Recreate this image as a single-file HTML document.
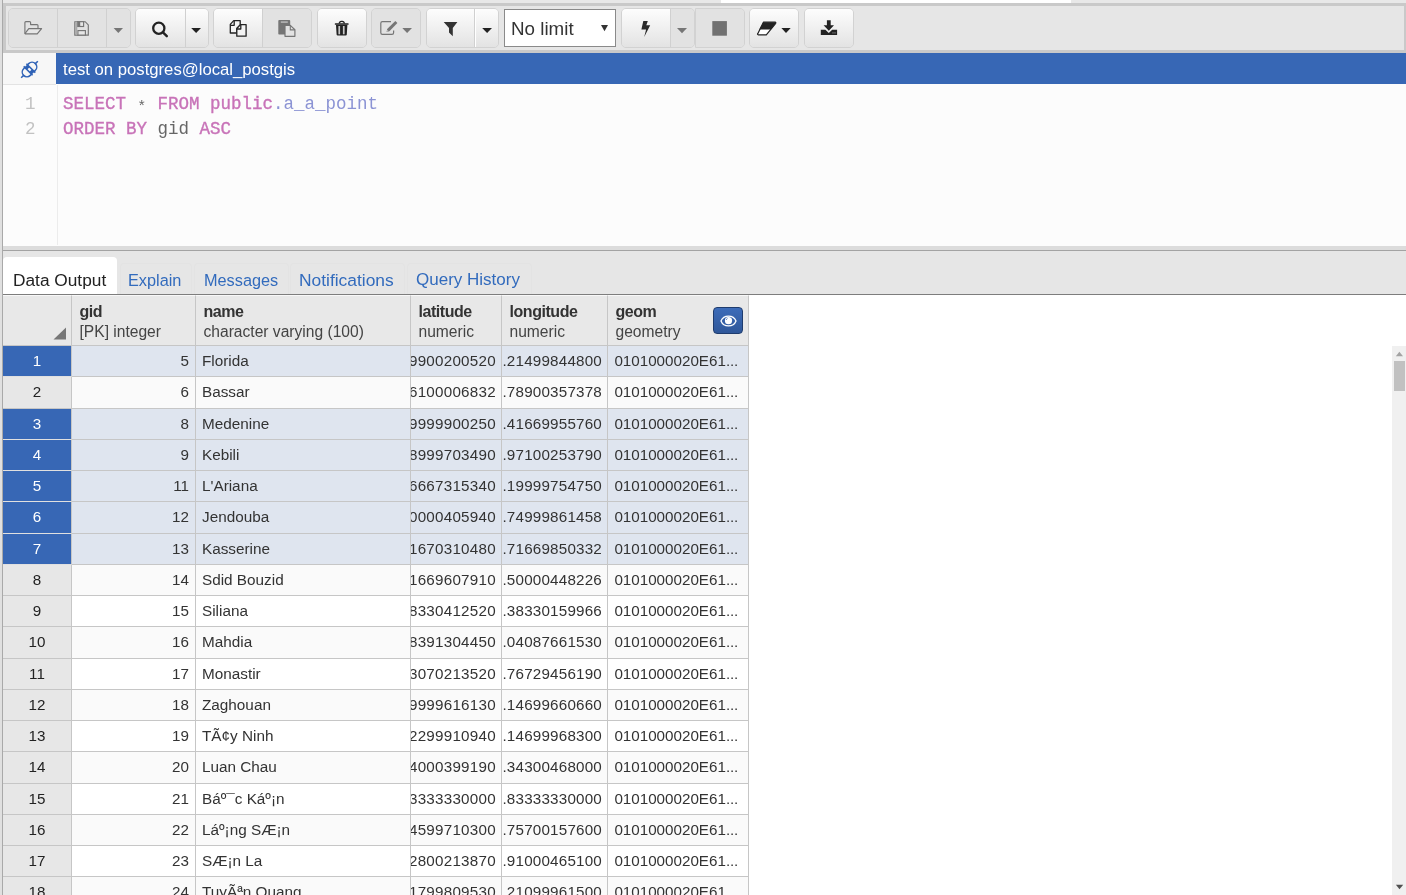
<!DOCTYPE html>
<html><head><meta charset="utf-8">
<style>
*{box-sizing:border-box;margin:0;padding:0}
html,body{will-change:transform;width:1406px;height:895px;overflow:hidden;background:#fff;font-family:"Liberation Sans",sans-serif;position:relative}
.abs{position:absolute}
#lstrip{left:0;top:0;width:2px;height:895px;background:#e0e0e0}
#lline{left:2px;top:0;width:1px;height:895px;background:#a9a9a9}
#topstrip{left:3px;top:0;width:1403px;height:3px;background:#e8e8e8}
#topwhite{left:721px;top:0;width:350px;height:3px;background:#fff}
#toolbar{left:3px;top:3px;width:1403px;height:50px;border:3px solid #c9c9c9;border-right-width:2px;background:#e6e6e6}
.grp{position:absolute;top:8px;height:39.5px;border:1px solid #d2d2d2;border-radius:5px;overflow:hidden;display:flex}
.btn{position:relative;height:100%}
.en{background:linear-gradient(#fdfdfd,#e3e3e3)}
.dis{background:#e2e2e2}
.sep{border-left:1px solid #d0d0d0}
.sepw{border-left:1px solid #d0d0d0;box-shadow:inset 1px 0 0 #fff}
.btn svg{position:absolute}
#conn{left:3px;top:53px;width:53px;height:32px;background:#f7f7f7;border-bottom:1px solid #e3e3e3}
#connbar{left:56px;top:53px;width:1350px;height:31px;background:#3767b5;color:#fff;font-size:16.7px;line-height:33px;padding-left:7px}
#gutter{left:3px;top:85px;width:55px;height:160px;background:#fcfcfc;border-right:1px solid #ececec}
#code{left:58px;top:84px;width:1348px;height:161px;background:#fcfcfc}
.ln{position:absolute;left:0;width:32.5px;text-align:right;font-family:"Liberation Mono",monospace;font-size:17.5px;color:#c2c2c2}
.cl{position:absolute;left:63px;font-family:"Liberation Mono",monospace;font-size:17.5px;color:#666;white-space:pre}
.kw{-webkit-text-stroke:0.35px currentColor}
.ast{position:relative;top:2px;font-size:15px;display:inline-block;width:10.5px;text-align:center}
.kw{color:#c873b8}
.id{color:#8b93d4}
#spl1{left:3px;top:245px;width:1403px;height:1px;background:#fcfcfc}
#spl2{left:3px;top:246px;width:1403px;height:4px;background:#dcdcdc}
#spl3{left:3px;top:250px;width:1403px;height:1px;background:#a3a3a3}
#tabs{left:3px;top:251px;width:1403px;height:43px;background:#e6e6e6}
#tabline{left:3px;top:294px;width:1403px;height:1px;background:#7d7d7d}
.tab{position:absolute;top:21px;font-size:16.3px;color:#326bbd;white-space:pre}
#acttab{left:3px;top:257px;width:114px;height:37px;background:#fff;border-radius:4px 4px 0 0}
/* grid */
#grid{left:3px;top:295px;width:746px;height:600px;overflow:hidden}
.hdr{position:absolute;top:0;height:51px;background:#e8e8e8;border-top:1px solid #f8f8f8;border-right:1px solid #c6c6c6;border-bottom:1px solid #c6c6c6}
.hl{position:absolute;left:7.5px;top:6.8px;font-size:16px;letter-spacing:-0.45px;font-weight:bold;color:#333;white-space:pre}
.ht{position:absolute;left:7.5px;top:26.5px;font-size:15.6px;color:#444;white-space:pre}
.row{position:absolute;left:0;width:746px;height:31.25px}
.c{position:absolute;top:0;height:31.25px;border-right:1px solid #c6c6c6;border-bottom:1px solid #c6c6c6;font-size:15.2px;color:#333;line-height:30px;white-space:pre;overflow:hidden}
.rn{left:0;width:69px;text-align:center;background:#e7e7e7;color:#222}
.sel .rn{background:#3767b5;color:#fff;border-bottom-color:#e0e0e0}
.c1{left:69px;width:124px;text-align:right;padding-right:6px}
.c2{left:193px;width:215px;padding-left:6px;font-size:15.3px}
.c3{left:408px;width:91px;direction:rtl;text-align:left;padding-left:0}
.c3 span{direction:ltr;unicode-bidi:bidi-override;position:absolute;right:5.1px;letter-spacing:0.25px}
.c4{left:499px;width:106px}
.c4 span{position:absolute;right:5px;letter-spacing:0.2px}
.c5{left:605px;width:141px;padding-left:6.4px}
.even .c{background:#fafafa}
.odd .c{background:#fff}
.sel .c{background:#dfe5ef}
.row .c.rn{background:#e7e7e7}
.row.sel .c.rn{background:#3767b5;color:#fff}
#sb{left:1392px;top:346px;width:14px;height:549px;background:#f0f0f0}
#sbthumb{left:1394px;top:361px;width:11px;height:30px;background:#c1c1c1}
</style></head><body>
<div class="abs" id="lstrip"></div>
<div class="abs" id="lline"></div>
<div class="abs" id="topstrip"></div>
<div class="abs" id="topwhite"></div>
<div class="abs" id="toolbar"></div>
<div class="grp" style="left:7.8px;width:123.4px"><div class="btn dis" style="width:48.3px"></div><div class="btn dis sep" style="width:49.2px"></div><div class="btn dis sep" style="flex:1"></div></div>
<div class="grp en2" style="left:135.0px;width:73.8px"><div class="btn en" style="width:48.5px"></div><div class="btn en sep" style="flex:1"></div></div>
<div class="grp" style="left:213.1px;width:99.0px"><div class="btn en" style="width:48.1px"></div><div class="btn dis sep" style="flex:1"></div></div>
<div class="grp" style="left:317.1px;width:49.7px"><div class="btn en" style="flex:1"></div></div>
<div class="grp" style="left:370.8px;width:50.4px"><div class="btn dis" style="flex:1"></div></div>
<div class="grp" style="left:426.2px;width:72.6px"><div class="btn en" style="width:47.2px"></div><div class="btn en sepw" style="flex:1"></div></div>
<div class="abs" style="left:504px;top:9px;width:111.7px;height:37.7px;background:#fff;border:1px solid #8a8a8a"></div>
<div class="abs" style="left:511px;top:17.7px;font-size:18.8px;color:#333;white-space:pre">No limit</div>
<div class="grp" style="left:621.1px;width:73.7px"><div class="btn en" style="width:48.1px"></div><div class="btn dis sep" style="flex:1"></div></div>
<div class="grp" style="left:694.5px;width:50.8px;border-radius:0 5px 5px 0"><div class="btn dis" style="flex:1"></div></div>
<div class="grp" style="left:748.8px;width:50.1px"><div class="btn en" style="flex:1"></div></div>
<div class="grp" style="left:803.6px;width:50.3px"><div class="btn en" style="flex:1"></div></div>
<svg class="abs" style="left:0;top:0" width="1406" height="53" viewBox="0 0 1406 53">
 <!-- folder -->
 <g fill="none" stroke="#757575" stroke-width="1.15" stroke-linejoin="round">
  <path d="M24.9,33.6 V22.6 Q24.9,21.6 25.9,21.6 H29.6 Q30.6,21.6 30.6,22.6 V24.6 H37 Q38,24.6 38,25.6 V28.3"/>
  <path d="M24.9,33.6 L28.8,28.6 H41.6 L37.2,33.9 H25.4 Z" fill="#e6e6e6"/>
 </g>
 <!-- save -->
 <g fill="none" stroke="#757575" stroke-width="1.15">
  <path d="M74.8,21.7 H85.2 L88.3,24.9 V35.1 H74.8 Z"/>
  <rect x="77.6" y="21.7" width="6" height="4.8" fill="#e6e6e6"/>
  <rect x="77.6" y="21.7" width="2.6" height="4.8" fill="#757575" stroke="none"/>
  <rect x="77.9" y="30.6" width="7.5" height="4.5" fill="#e6e6e6"/>
  <rect x="75.3" y="22.2" width="2" height="12.4" fill="#aaa" stroke="none"/>
 </g>
 <!-- carets -->
 <path d="M113.6,28.1 H123 L118.3,33 Z" fill="#767676"/>
 <path d="M191.2,28.1 H201 L196.1,33 Z" fill="#222"/>
 <path d="M402.3,27.9 H412 L407.1,33 Z" fill="#767676"/>
 <path d="M482.2,27.9 H492 L487.1,33 Z" fill="#222"/>
 <path d="M677,27.9 H687 L682,33.2 Z" fill="#767676"/>
 <path d="M781.4,27.9 H790.7 L786,33 Z" fill="#222"/>
 <path d="M601,25 H608 L604.5,31.3 Z" fill="#333"/>
 <!-- search -->
 <circle cx="158.8" cy="28.2" r="5.6" fill="none" stroke="#222" stroke-width="2.3"/>
 <path d="M163.2,32.7 L166.8,36.2" stroke="#222" stroke-width="2.4" stroke-linecap="round"/>
 <!-- copy -->
 <g fill="#f4f4f4" stroke="#222" stroke-width="1.3" stroke-linejoin="round">
  <path d="M230.3,24.4 L233.7,20.6 H240.2 V25 L236.8,28.5 V33 H230.3 Z"/>
  <path d="M230.5,25.3 H234.2 V21" fill="none"/>
  <path d="M236.8,28.5 L240.5,24.6 H246.1 V36.2 H236.8 Z"/>
  <path d="M237,29 H240.8 V24.8" fill="none"/>
 </g>
 <!-- paste -->
 <rect x="278.3" y="20.1" width="11.9" height="14.5" rx="0.8" fill="#757575"/>
 <rect x="280.8" y="21.3" width="7" height="1.6" fill="#b5b5b5"/>
 <path d="M285,25.4 H290.3 L294.9,29.8 V36.3 H285 Z" fill="#e2e2e2" stroke="#757575" stroke-width="1.2" stroke-linejoin="round"/>
 <path d="M290.3,25.4 V29.9 H294.9" fill="none" stroke="#757575" stroke-width="1.1"/>
 <!-- trash -->
 <g fill="#222">
  <path d="M338.6,23.5 Q338.9,20.8 341.3,20.8 H342.3 Q344.7,20.8 345,23.5 H343.8 Q343.6,22 342.1,22 H341.5 Q340,22 339.8,23.5 Z"/>
  <rect x="334.8" y="23.3" width="13.8" height="1.5" rx="0.5"/>
  <path d="M336,24.8 H347.4 L346.8,34.6 Q346.7,35.6 345.7,35.6 H337.7 Q336.7,35.6 336.6,34.6 Z"/>
 </g>
 <rect x="338.4" y="26" width="1.7" height="8.3" fill="#c8c8c8"/>
 <rect x="342.9" y="26" width="1.7" height="8.3" fill="#c8c8c8"/>
 <!-- edit -->
 <path d="M391,21.6 H382.4 Q380.8,21.6 380.8,23.2 V32.8 Q380.8,34.4 382.4,34.4 H392 Q393.6,34.4 393.6,32.8 V30.4" fill="none" stroke="#767676" stroke-width="1.2"/>
 <path d="M386.6,32.1 L387.2,29 L395.3,21 L397.4,23.1 L389.4,31.2 Z" fill="#767676"/>
 <path d="M386.9,31.8 L387.4,30 L388.3,30.9 Z" fill="#e2e2e2"/>
 <!-- filter -->
 <path d="M443.7,22.1 H457.4 L452.8,27.9 V36.2 L449,32.6 V27.9 Z" fill="#333"/>
 <!-- bolt -->
 <path d="M643.3,21 L647.8,21 L646.3,25.3 L650.2,25.2 L644.2,36.9 L646.1,29.4 L641.4,29.6 Z" fill="#2a2a2a"/>
 <!-- stop -->
 <rect x="712.3" y="21.1" width="14.6" height="14.6" fill="#717171"/>
 <!-- eraser -->
 <path d="M763.4,22.2 H775 Q776.4,22.4 775.5,23.6 L766.3,34.8 H758.4 Q757,34.6 757.9,33.4 Z" fill="#fff" stroke="#222" stroke-width="1.2" stroke-linejoin="round"/>
 <path d="M763.4,22.2 H775 Q776.4,22.4 775.5,23.6 L770.8,29.6 H759.2 Z" fill="#222"/>
 <!-- download -->
 <path d="M826.9,20.2 H830.7 V25.3 H834 L828.8,30.8 L823.6,25.3 H826.9 Z" fill="#222"/>
 <path d="M820.8,29.8 H825.4 L828.8,32.9 L832.2,29.8 H837.1 V34.9 H820.8 Z" fill="#222"/>
 <rect x="832.4" y="32.4" width="1.2" height="1" fill="#999"/>
 <rect x="834.4" y="32.4" width="1.2" height="1" fill="#999"/>
</svg>


<div class="abs" id="conn"></div>
<svg class="abs" style="left:16.9px;top:56.9px" width="25" height="25" viewBox="-12.5 -12.5 25 25"><g transform="rotate(-45)" fill="none" stroke="#2f62b6" stroke-width="1.5" stroke-linecap="butt"><path d="M-11.8,0 H-8.3"/><path d="M8.3,0 H11.8"/><path d="M-1.9,-4.7 H-3.6 A4.7,4.7 0 0 0 -3.6,4.7 H-1.9"/><path d="M1.9,-4.7 H3.6 A4.7,4.7 0 0 1 3.6,4.7 H1.9"/><path d="M-1.9,-6.3 V6.3"/><path d="M1.9,-6.3 V6.3"/></g><g transform="rotate(-45)" fill="#2f62b6"><rect x="-2" y="-5.1" width="4" height="3.5"/><rect x="-2" y="1.6" width="4" height="3.5"/></g></svg>
<div class="abs" id="connbar">test on postgres@local_postgis</div>
<div class="abs" id="gutter">
  <div class="ln" style="top:9px">1</div>
  <div class="ln" style="top:34px">2</div>
</div>
<div class="abs" id="code"></div>
<div class="cl abs" style="top:94px"><span class="kw">SELECT</span> <span class="ast">*</span> <span class="kw">FROM</span> <span class="kw">public</span><span class="id">.a_a_point</span></div>
<div class="cl abs" style="top:119px"><span class="kw">ORDER</span> <span class="kw">BY</span> gid <span class="kw">ASC</span></div>

<div class="abs" id="spl1"></div>
<div class="abs" id="spl2"></div>
<div class="abs" id="spl3"></div>
<div class="abs" id="tabs"></div>
<div class="abs" id="acttab"></div>
<div class="abs" style="left:119.5px;top:263px;width:72.5px;height:31px;border:1px solid #e3e3e3;border-bottom:none;border-radius:4px 4px 0 0"></div>
<div class="abs" style="left:193.5px;top:263px;width:95px;height:31px;border:1px solid #e3e3e3;border-bottom:none;border-radius:4px 4px 0 0"></div>
<div class="abs" style="left:290px;top:263px;width:115px;height:31px;border:1px solid #e3e3e3;border-bottom:none;border-radius:4px 4px 0 0"></div>
<div class="abs" style="left:406.5px;top:263px;width:125px;height:31px;border:1px solid #e3e3e3;border-bottom:none;border-radius:4px 4px 0 0"></div>

<div class="abs" id="tabline"></div>
<div class="abs tab" style="left:13px;top:269.6px;color:#222;font-size:17.3px">Data Output</div>
<div class="abs tab" style="left:128px;top:270.6px">Explain</div>
<div class="abs tab" style="left:204px;top:270.6px">Messages</div>
<div class="abs tab" style="left:299px;top:269.5px;font-size:17.4px">Notifications</div>
<div class="abs tab" style="left:416px;top:269.9px;font-size:17px">Query History</div>

<div class="abs" id="grid">
 <div class="hdr" style="left:0;width:69px"><svg style="position:absolute;left:50px;top:31px" width="14" height="13"><path d="M13,0.5 V12.5 H0.5 Z" fill="#777"/></svg></div>
<div class="hdr" style="left:69px;width:124px"><div class="hl">gid</div><div class="ht">[PK] integer</div></div>
<div class="hdr" style="left:193px;width:215px"><div class="hl">name</div><div class="ht">character varying (100)</div></div>
<div class="hdr" style="left:408px;width:91px"><div class="hl">latitude</div><div class="ht">numeric</div></div>
<div class="hdr" style="left:499px;width:106px"><div class="hl">longitude</div><div class="ht">numeric</div></div>
<div class="hdr" style="left:605px;width:141px"><div class="hl">geom</div><div class="ht">geometry</div>
<div style="position:absolute;left:105px;top:11px;width:30px;height:26.5px;border:1px solid #1f3c6e;border-radius:4px;background:linear-gradient(#3d6cb9,#2f5799)"><svg style="position:absolute;left:5.8px;top:7.4px" width="17" height="12" viewBox="0 0 17 12"><path d="M1,6 C3.6,-0.6 13.4,-0.6 16,6 C13.4,12.6 3.6,12.6 1,6 Z" fill="none" stroke="#fff" stroke-width="1.3"/><circle cx="8.5" cy="5.7" r="3.6" fill="#fff"/><path d="M6.2,4.9 L7.4,3.4" stroke="#3564b0" stroke-width="0.8"/></svg></div></div>

<div class="row odd sel" style="top:51.0px"><div class="c rn">1</div><div class="c c1">5</div><div class="c c2">Florida</div><div class="c c3"><span>39900200520</span></div><div class="c c4"><span>.21499844800</span></div><div class="c c5">0101000020E61.<span style="letter-spacing:-0.3px">..</span></div></div>
<div class="row even" style="top:82.25px"><div class="c rn">2</div><div class="c c1">6</div><div class="c c2">Bassar</div><div class="c c3"><span>36100006832</span></div><div class="c c4"><span>.78900357378</span></div><div class="c c5">0101000020E61.<span style="letter-spacing:-0.3px">..</span></div></div>
<div class="row odd sel" style="top:113.5px"><div class="c rn">3</div><div class="c c1">8</div><div class="c c2">Medenine</div><div class="c c3"><span>39999900250</span></div><div class="c c4"><span>.41669955760</span></div><div class="c c5">0101000020E61.<span style="letter-spacing:-0.3px">..</span></div></div>
<div class="row even sel" style="top:144.75px"><div class="c rn">4</div><div class="c c1">9</div><div class="c c2">Kebili</div><div class="c c3"><span>38999703490</span></div><div class="c c4"><span>.97100253790</span></div><div class="c c5">0101000020E61.<span style="letter-spacing:-0.3px">..</span></div></div>
<div class="row odd sel" style="top:176.0px"><div class="c rn">5</div><div class="c c1">11</div><div class="c c2">L&#39;Ariana</div><div class="c c3"><span>36667315340</span></div><div class="c c4"><span>.19999754750</span></div><div class="c c5">0101000020E61.<span style="letter-spacing:-0.3px">..</span></div></div>
<div class="row even sel" style="top:207.25px"><div class="c rn">6</div><div class="c c1">12</div><div class="c c2">Jendouba</div><div class="c c3"><span>30000405940</span></div><div class="c c4"><span>.74999861458</span></div><div class="c c5">0101000020E61.<span style="letter-spacing:-0.3px">..</span></div></div>
<div class="row odd sel" style="top:238.5px"><div class="c rn">7</div><div class="c c1">13</div><div class="c c2">Kasserine</div><div class="c c3"><span>31670310480</span></div><div class="c c4"><span>.71669850332</span></div><div class="c c5">0101000020E61.<span style="letter-spacing:-0.3px">..</span></div></div>
<div class="row even" style="top:269.75px"><div class="c rn">8</div><div class="c c1">14</div><div class="c c2">Sdid Bouzid</div><div class="c c3"><span>31669607910</span></div><div class="c c4"><span>.50000448226</span></div><div class="c c5">0101000020E61.<span style="letter-spacing:-0.3px">..</span></div></div>
<div class="row odd" style="top:301.0px"><div class="c rn">9</div><div class="c c1">15</div><div class="c c2">Siliana</div><div class="c c3"><span>38330412520</span></div><div class="c c4"><span>.38330159966</span></div><div class="c c5">0101000020E61.<span style="letter-spacing:-0.3px">..</span></div></div>
<div class="row even" style="top:332.25px"><div class="c rn">10</div><div class="c c1">16</div><div class="c c2">Mahdia</div><div class="c c3"><span>38391304450</span></div><div class="c c4"><span>.04087661530</span></div><div class="c c5">0101000020E61.<span style="letter-spacing:-0.3px">..</span></div></div>
<div class="row odd" style="top:363.5px"><div class="c rn">11</div><div class="c c1">17</div><div class="c c2">Monastir</div><div class="c c3"><span>33070213520</span></div><div class="c c4"><span>.76729456190</span></div><div class="c c5">0101000020E61.<span style="letter-spacing:-0.3px">..</span></div></div>
<div class="row even" style="top:394.75px"><div class="c rn">12</div><div class="c c1">18</div><div class="c c2">Zaghouan</div><div class="c c3"><span>39999616130</span></div><div class="c c4"><span>.14699660660</span></div><div class="c c5">0101000020E61.<span style="letter-spacing:-0.3px">..</span></div></div>
<div class="row odd" style="top:426.0px"><div class="c rn">13</div><div class="c c1">19</div><div class="c c2">TÃ¢y Ninh</div><div class="c c3"><span>32299910940</span></div><div class="c c4"><span>.14699968300</span></div><div class="c c5">0101000020E61.<span style="letter-spacing:-0.3px">..</span></div></div>
<div class="row even" style="top:457.25px"><div class="c rn">14</div><div class="c c1">20</div><div class="c c2">Luan Chau</div><div class="c c3"><span>34000399190</span></div><div class="c c4"><span>.34300468000</span></div><div class="c c5">0101000020E61.<span style="letter-spacing:-0.3px">..</span></div></div>
<div class="row odd" style="top:488.5px"><div class="c rn">15</div><div class="c c1">21</div><div class="c c2">Báº¯c Káº¡n</div><div class="c c3"><span>33333330000</span></div><div class="c c4"><span>.83333330000</span></div><div class="c c5">0101000020E61.<span style="letter-spacing:-0.3px">..</span></div></div>
<div class="row even" style="top:519.75px"><div class="c rn">16</div><div class="c c1">22</div><div class="c c2">Láº¡ng SÆ¡n</div><div class="c c3"><span>34599710300</span></div><div class="c c4"><span>.75700157600</span></div><div class="c c5">0101000020E61.<span style="letter-spacing:-0.3px">..</span></div></div>
<div class="row odd" style="top:551.0px"><div class="c rn">17</div><div class="c c1">23</div><div class="c c2">SÆ¡n La</div><div class="c c3"><span>32800213870</span></div><div class="c c4"><span>.91000465100</span></div><div class="c c5">0101000020E61.<span style="letter-spacing:-0.3px">..</span></div></div>
<div class="row even" style="top:582.25px"><div class="c rn">18</div><div class="c c1">24</div><div class="c c2">TuyÃªn Quang</div><div class="c c3"><span>31799809530</span></div><div class="c c4"><span>.21099961500</span></div><div class="c c5">0101000020E61.<span style="letter-spacing:-0.3px">..</span></div></div>
</div>
<div class="abs" id="sb"></div>
<div class="abs" id="sbthumb"></div>
<svg class="abs" style="left:1392px;top:346px" width="14" height="549"><path d="M3.8,10.2 H11 L7.4,5.8 Z" fill="#a3a3a3"/><path d="M3.9,538.8 H11.2 L7.5,543.2 Z" fill="#505050"/></svg>
</body></html>
